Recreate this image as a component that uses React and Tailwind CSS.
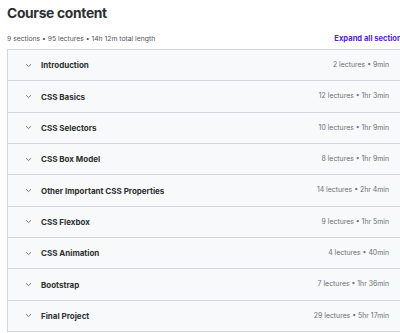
import React from "react";

const sections = [
  { title: "Introduction", meta: "2 lectures • 9min" },
  { title: "CSS Basics", meta: "12 lectures • 1hr 3min" },
  { title: "CSS Selectors", meta: "10 lectures • 1hr 9min" },
  { title: "CSS Box Model", meta: "8 lectures • 1hr 9min" },
  { title: "Other Important CSS Properties", meta: "14 lectures • 2hr 4min" },
  { title: "CSS Flexbox", meta: "9 lectures • 1hr 5min" },
  { title: "CSS Animation", meta: "4 lectures • 40min" },
  { title: "Bootstrap", meta: "7 lectures • 1hr 36min" },
  { title: "Final Project", meta: "29 lectures • 5hr 17min" },
];

const Chevron = () => (
  <svg width="7" height="5" viewBox="0 0 7 5" className="text-[#6a6f73]">
    <path d="M1 1.2 L3.5 3.6 L6 1.2" fill="none" stroke="currentColor" strokeWidth="0.9" />
  </svg>
);

export default function App() {
  return (
    <div className="w-[400px] h-[333px] overflow-hidden bg-white" style={{ fontFamily: "Inter, 'Liberation Sans', sans-serif" }}>
      <div className="w-[406px] pl-[7px]">
        <h2 className="pt-[3px] text-[13.8px] leading-[20px] font-bold text-[#2d2f31] tracking-[-0.3px]">Course content</h2>
        <div className="mt-[10px] flex items-center justify-between h-[12px]">
          <span className="text-[6.8px] text-[#51555a]">9 sections • 95 lectures • 14h 12m total length</span>
          <span className="text-[7.6px] font-bold text-[#5624d0] whitespace-nowrap">Expand all sections</span>
        </div>
        <div className="mt-[4px] border-t border-l border-[#d1d7dc]">
          {sections.map((s) => (
            <div key={s.title} className="h-[31.35px] flex items-center bg-[#f7f9fa] border-b border-[#d1d7dc] pl-[17px] pr-[17px]">
              <Chevron />
              <span className="ml-[9px] text-[8px] font-bold text-[#2d2f31]">{s.title}</span>
              <span className="ml-auto text-[6.9px] text-[#6a6f73]">{s.meta}</span>
            </div>
          ))}
        </div>
      </div>
    </div>
  );
}
